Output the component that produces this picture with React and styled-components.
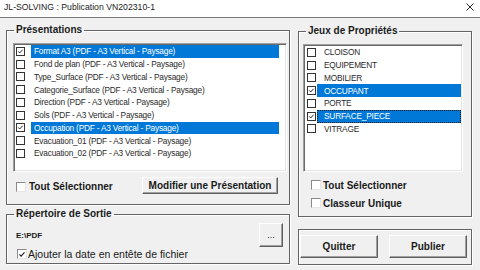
import React from 'react';
import styled, { createGlobalStyle } from 'styled-components';

const Global = createGlobalStyle`
  html, body { margin: 0; padding: 0; }
  body {
    width: 480px; height: 270px; overflow: hidden;
    background: #f0f0f0;
    font-family: "Liberation Sans", Arial, sans-serif;
    color: #1b1b1b;
  }
  * { box-sizing: border-box; }
`;

const Window = styled.div`
  width: 480px; height: 270px;
  display: flex; flex-direction: column;
  background: #f0f0f0;
`;

const TitleBar = styled.div`
  flex: none; height: 18px;
  background: #fff;
  border-bottom: 1px solid #7a7a7a;
  display: flex; align-items: center;
  padding: 0 6px 4px 4px;
  font-size: 8.7px; color: #1a1a1a;
`;

const Title = styled.span`
  flex: 1; white-space: nowrap;
`;

const Body = styled.div`
  display: grid;
  grid-template-columns: 284px 174px;
  column-gap: 8px;
  padding: 6px 0 0 6px;
`;

const Column = styled.div`
  display: flex; flex-direction: column;
  gap: ${p => p.$gap}px;
  padding-top: ${p => p.$top || 0}px;
`;

const Frame = styled.fieldset`
  margin: 0; padding: ${p => p.$pad || '0'}; min-width: 0;
  height: ${p => p.$h}px;
  border: 1px solid #646464;
  box-shadow: inset 1px 1px 0 #fff, 1px 1px 0 #fff;
  display: flex;
  flex-direction: ${p => (p.$row ? 'row' : 'column')};
  gap: ${p => p.$gap || 0}px;
`;

const Legend = styled.legend`
  font: bold 10px/12px "Liberation Sans", Arial, sans-serif;
  color: #1a1a1a;
  padding: 0 2px;
  margin-left: 7px;
`;

const ListBox = styled.div`
  flex: none;
  margin: ${p => p.$m};
  width: ${p => p.$w}px;
  height: ${p => p.$h}px;
  background: #fff;
  border: 1px solid;
  border-color: #a0a0a0 #fff #fff #a0a0a0;
  box-shadow: inset 1px 1px 0 #696969, inset -1px -1px 0 #e3e3e3;
  padding: 1px;
`;

const Row = styled.div`
  display: flex; align-items: center;
  height: 12.75px;
  padding-left: ${p => p.$pl}px;
`;

const Item = styled.span`
  flex: 1; height: 100%;
  display: flex; align-items: center;
  margin-left: ${p => p.$ml}px;
  margin-right: ${p => p.$mr}px;
  padding-left: ${p => p.$pad}px;
  background: ${p => (p.$sel ? '#0078d7' : 'transparent')};
  color: ${p => (p.$sel ? '#fff' : '#2b2b2b')};
  font-size: 8.3px;
  letter-spacing: -0.2px;
  white-space: nowrap;
  outline: ${p => (p.$focus ? '1px dotted #1a1a1a' : 'none')};
  outline-offset: -1px;
`;

const Box = styled.span`
  flex: none;
  width: ${p => p.$size}px; height: ${p => p.$size}px;
  display: inline-flex; align-items: center; justify-content: center;
  background: #fff;
  border: 1px solid;
  border-color: ${p => (p.$flat ? '#333 #333 #333 #333' : '#8a8a8a #e6e6e6 #e6e6e6 #8a8a8a')};
`;

const Footer = styled.div`
  display: flex; align-items: center;
  margin: ${p => p.$m};
`;

const CheckLabel = styled.label`
  display: flex; align-items: center;
  gap: ${p => p.$gap}px;
  height: 14px;
  margin: ${p => p.$m || '0'};
  font-family: "Liberation Sans", Arial, sans-serif;
  font-weight: ${p => (p.$bold ? 'bold' : 'normal')};
  font-size: ${p => p.$fs}px;
  color: #1a1a1a;
  white-space: nowrap;
`;

const Button = styled.button`
  flex: none;
  width: ${p => p.$w}px; height: ${p => p.$h}px;
  margin-left: ${p => (p.$auto ? 'auto' : '0')};
  padding: 0;
  background: #f0f0f0;
  border: 1px solid;
  border-color: #fff #5f5f5f #5f5f5f #fff;
  box-shadow: inset -1px -1px 0 #a0a0a0;
  font-family: "Liberation Sans", Arial, sans-serif;
  font-weight: ${p => (p.$light ? 'normal' : 'bold')};
  font-size: ${p => p.$fs || 10}px;
  color: #1a1a1a;
`;

const PathText = styled.span`
  flex: 1;
  padding-left: 9px;
  font: bold 8px "Liberation Sans", Arial, sans-serif;
  color: #1a1a1a;
`;

const Check = () => (
  <svg width="9" height="9" viewBox="0 0 9 9">
    <path d="M1.6 4.4 L3.5 6.4 L7.3 2.2" fill="none" stroke="#1a1a1a" strokeWidth="1.2" />
  </svg>
);

const CloseIcon = () => (
  <svg width="8" height="8" viewBox="0 0 8 8">
    <path d="M0.5 0.5 L7.5 7.5 M7.5 0.5 L0.5 7.5" stroke="#2a2a2a" strokeWidth="1" />
  </svg>
);

const presentations = [
  ['Format A3 (PDF - A3 Vertical - Paysage)', true],
  ['Fond de plan (PDF - A3 Vertical - Paysage)', false],
  ['Type_Surface (PDF - A3 Vertical - Paysage)', false],
  ['Categorie_Surface (PDF - A3 Vertical - Paysage)', false],
  ['Direction (PDF - A3 Vertical - Paysage)', false],
  ['Sols (PDF - A3 Vertical - Paysage)', false],
  ['Occupation (PDF - A3 Vertical - Paysage)', true],
  ['Evacuation_01 (PDF - A3 Vertical - Paysage)', false],
  ['Evacuation_02 (PDF - A3 Vertical - Paysage)', false],
];

const jeux = [
  ['CLOISON', false],
  ['EQUIPEMENT', false],
  ['MOBILIER', false],
  ['OCCUPANT', true],
  ['PORTE', false],
  ['SURFACE_PIECE', true, true],
  ['VITRAGE', false],
];

export default function App() {
  return (
    <Window>
      <Global />
      <TitleBar>
        <Title>JL-SOLVING : Publication VN202310-1</Title>
        <CloseIcon />
      </TitleBar>
      <Body>
        <Column $gap={3}>
          <Frame $h={181}>
            <Legend>Présentations</Legend>
            <ListBox $m="7px 0 0 6px" $w={274} $h={129}>
              {presentations.map(([label, sel]) => (
                <Row key={label} $pl={1}>
                  <Box $flat $size={9}>{sel && <Check />}</Box>
                  <Item $sel={sel} $ml={6} $mr={6} $pad={3}>{label}</Item>
                </Row>
              ))}
            </ListBox>
            <Footer $m="5px 11px 0 9px">
              <CheckLabel $bold $fs={10} $gap={3} $m="2px 0 0 0">
                <Box $size={10} />
                Tout Sélectionner
              </CheckLabel>
              <Button $auto $w={136} $h={17}>Modifier une Présentation</Button>
            </Footer>
          </Frame>
          <Frame $h={56}>
            <Legend>Répertoire de Sortie</Legend>
            <Footer $m="3px 6px 0 0">
              <PathText>E:\PDF</PathText>
              <Button $light $fs={9} $w={24} $h={24}>...</Button>
            </Footer>
            <CheckLabel $fs={10.5} $gap={1} $m="0 0 0 10px">
              <Box $size={10}><Check /></Box>
              Ajouter la date en entête de fichier
            </CheckLabel>
          </Frame>
        </Column>
        <Column $gap={12} $top={1}>
          <Frame $h={192}>
            <Legend>Jeux de Propriétés</Legend>
            <ListBox $m="7px 0 0 4px" $w={160} $h={128}>
              {jeux.map(([label, sel, focus]) => (
                <Row key={label} $pl={2}>
                  <Box $flat $size={9}>{sel && <Check />}</Box>
                  <Item $sel={sel} $focus={focus} $ml={1} $mr={0} $pad={7}>{label}</Item>
                </Row>
              ))}
            </ListBox>
            <CheckLabel $bold $fs={10} $gap={2} $m="6px 0 0 12px">
              <Box $size={10} />
              Tout Sélectionner
            </CheckLabel>
            <CheckLabel $bold $fs={10} $gap={2} $m="4px 0 0 12px">
              <Box $size={10} />
              Classeur Unique
            </CheckLabel>
          </Frame>
          <Frame $h={36} $row $pad="5px 0 0 1px" $gap={11}>
            <Button $w={78} $h={23}>Quitter</Button>
            <Button $w={78} $h={23}>Publier</Button>
          </Frame>
        </Column>
      </Body>
    </Window>
  );
}
